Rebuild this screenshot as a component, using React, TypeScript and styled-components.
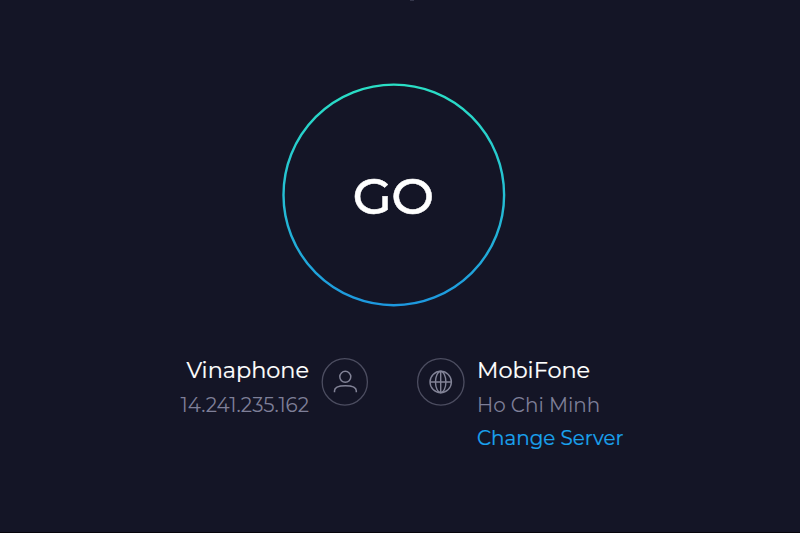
import styled, { createGlobalStyle } from 'styled-components'

const GlobalStyle = createGlobalStyle`
  * {
    box-sizing: border-box;
  }

  body {
    margin: 0;
    background-color: #141526;
    font-family: Montserrat, Inter, sans-serif;
  }
`

const Page = styled.main`
  position: relative;
  width: 800px;
  height: 533px;
  padding-top: 82px;
  overflow: hidden;
  background-color: #141526;
  border-bottom: 1px solid #06040c;
`

const TopMark = styled.span`
  position: absolute;
  top: 0;
  left: 410px;
  width: 4px;
  height: 1px;
  background-color: #34364a;
`

const GoButton = styled.button`
  display: grid;
  place-items: center;
  width: 226px;
  height: 226px;
  margin: 0 0 0 281px;
  padding: 0;
  border: 0;
  background: none;
  color: #fff;
  font-family: inherit;
  cursor: pointer;

  > * {
    grid-area: 1 / 1;
  }
`

const GoLabel = styled.span`
  padding: 2px 2px 0 0;
  font-size: 51px;
  font-weight: 500;
  line-height: 60px;
  letter-spacing: -0.7px;
  -webkit-text-stroke: 0.5px currentColor;
`

const Connection = styled.section`
  display: flex;
  align-items: flex-start;
  margin-top: 46px;
`

const Provider = styled.div`
  display: flex;
  gap: 11px;
`

const Isp = styled(Provider)`
  justify-content: flex-end;
  width: 369px;
  text-align: right;
`

const Server = styled(Provider)`
  gap: 12px;
  margin-left: 47px;
`

const Details = styled.div`
  display: flex;
  flex-direction: column;
  white-space: nowrap;
`

const Name = styled.span`
  height: 34px;
  color: #fff;
  font-size: 22.4px;
  line-height: 33px;
  -webkit-text-stroke: 0.2px currentColor;
`

const Detail = styled.span`
  height: 34px;
  color: #7e7f98;
  font-size: 19.9px;
  line-height: 34px;
`

const ChangeServer = styled.a`
  height: 33px;
  color: #1aa4f0;
  font-size: 19.9px;
  line-height: 33px;
  text-decoration: none;
  -webkit-text-stroke: 0.2px currentColor;
  cursor: pointer;
`

const Badge = styled.svg`
  flex: none;
  width: 49px;
  height: 49px;
  margin-top: 3px;
  fill: none;
`

export default function App() {
  return (
    <>
      <GlobalStyle />
      <Page>
        <TopMark />
        <GoButton>
          <svg width="226" height="226" fill="none">
            <defs>
              <linearGradient id="ring" x1="0" y1="0" x2="0" y2="1">
                <stop offset="0" stopColor="#2adfc5" />
                <stop offset="0.5" stopColor="#25bfd3" />
                <stop offset="1" stopColor="#1d98df" />
              </linearGradient>
            </defs>
            <circle cx="112.8" cy="112.9" r="110.3" stroke="url(#ring)" strokeWidth="2.4" />
          </svg>
          <GoLabel>GO</GoLabel>
        </GoButton>

        <Connection>
          <Isp>
            <Details>
              <Name>Vinaphone</Name>
              <Detail>14.241.235.162</Detail>
            </Details>
            <Badge viewBox="0 0 49 49">
              <ellipse cx="24.8" cy="24.9" rx="22.6" ry="23.2" stroke="#4c4d60" strokeWidth="1.3" />
              <g stroke="#828397" strokeWidth="1.5">
                <circle cx="25.3" cy="19.8" r="5.5" />
                <path d="M14.5 35.2v-1.4c0-3 3.6-5 10.9-5s10.9 2 10.9 5v1.4" />
              </g>
            </Badge>
          </Isp>

          <Server>
            <Badge viewBox="0 0 49 49">
              <circle cx="24.8" cy="24.9" r="23.2" stroke="#4c4d60" strokeWidth="1.3" />
              <g stroke="#828397" strokeWidth="1.4">
                <circle cx="24.7" cy="25" r="10.7" />
                <ellipse cx="24.7" cy="25" rx="5.2" ry="10.7" />
                <path d="M24.7 14.3v21.4M14 25h21.4" />
              </g>
            </Badge>
            <Details>
              <Name>MobiFone</Name>
              <Detail>Ho Chi Minh</Detail>
              <ChangeServer>Change Server</ChangeServer>
            </Details>
          </Server>
        </Connection>
      </Page>
    </>
  )
}
